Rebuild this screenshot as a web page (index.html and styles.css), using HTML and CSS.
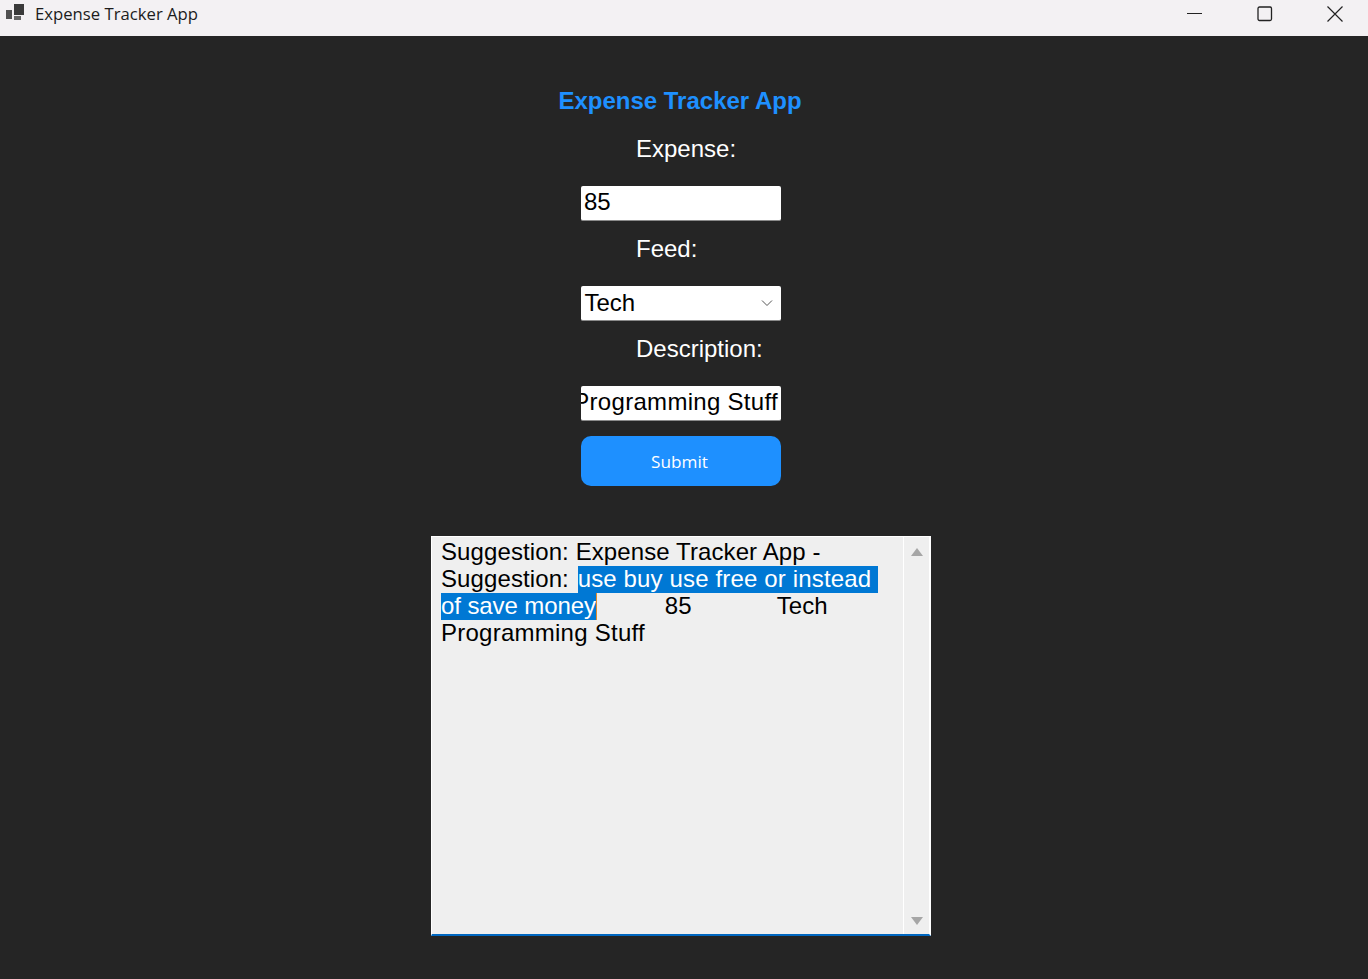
FILE: index.html
```html
<!DOCTYPE html>
<html lang="en">
<head>
    <meta charset="UTF-8">
    <title>Expense Tracker App</title>
    <link rel="stylesheet" href="styles.css">
</head>
<body>
    <!-- Window title bar -->
    <header class="titlebar">
        <svg class="app-icon" width="20" height="18" viewBox="0 0 20 18">
            <rect x="1" y="6" width="6" height="9" fill="#505050"/>
            <rect x="9" y="0" width="10" height="11" fill="#3a3a3a"/>
            <rect x="9" y="12" width="7" height="4" fill="#666"/>
        </svg>
        <span class="app-name">Expense Tracker App</span>
        <div class="win-controls">
            <div class="win-btn">
                <svg width="16" height="16" viewBox="0 0 16 16"><path d="M0 7.5H15" stroke="#222" fill="none"/></svg>
            </div>
            <div class="win-btn">
                <svg width="16" height="16" viewBox="0 0 16 16"><rect x="1" y="1" width="13.5" height="13.5" rx="1.5" stroke="#222" stroke-width="1.3" fill="none"/></svg>
            </div>
            <div class="win-btn">
                <svg width="16" height="16" viewBox="0 0 16 16"><path d="M0.5 0.5L15.5 15.5M15.5 0.5L0.5 15.5" stroke="#222" stroke-width="1.2" fill="none"/></svg>
            </div>
        </div>
    </header>

    <main class="app">
        <h1 class="app-title">Expense Tracker App</h1>

        <form class="expense-form">
            <div class="field">
                <label class="field-label">Expense:</label>
                <div class="text-box">85</div>
            </div>
            <div class="field">
                <label class="field-label">Feed:</label>
                <div class="text-box select-box">
                    <span>Tech</span>
                    <svg width="12" height="8" viewBox="0 0 12 8"><path d="M1 1.5L6 6.5L11 1.5" stroke="#555" fill="none"/></svg>
                </div>
            </div>
            <div class="field">
                <label class="field-label">Description:</label>
                <div class="text-box clipped-box"><span>Programming Stuff</span></div>
            </div>
            <button type="button" class="submit-btn">Submit</button>
        </form>

        <!-- Result box with its own scrollbar -->
        <section class="output">
            <div class="output-text">
                <div class="output-line">Suggestion: Expense Tracker App -</div>
                <div class="output-line">Suggestion: <span class="selected shifted">use buy use free or instead </span></div>
                <div class="output-line"><span class="selected tight">of save money</span><span class="caret"></span>&#9;85&#9;Tech</div>
                <div class="output-line wide">Programming Stuff</div>
            </div>
            <div class="scrollbar">
                <svg width="12" height="8" viewBox="0 0 12 8"><path d="M6 0L12 8H0Z" fill="#a6a6a6"/></svg>
                <svg width="12" height="8" viewBox="0 0 12 8"><path d="M0 0H12L6 8Z" fill="#a6a6a6"/></svg>
            </div>
        </section>
    </main>
</body>
</html>
```

FILE: styles.css
```css
/* General Reset */
* {
    margin: 0;
    padding: 0;
    box-sizing: border-box;
}

body {
    font-family: 'Liberation Sans', Arial, sans-serif;
    background: #252525;
    height: 979px;
    overflow: hidden;
}

.titlebar {
    height: 36px;
    background: #f3f1f3;
    display: flex;
    align-items: center;
}

.app-icon {
    margin-left: 5px;
    margin-bottom: 10px;
}

.app-name {
    margin-left: 10px;
    margin-bottom: 10px;
    font-family: 'Open Sans', sans-serif;
    font-size: 16.7px;
    color: #1c1c1c;
}

.win-controls {
    margin-left: auto;
    margin-right: -2px;
    display: flex;
}

.win-btn {
    width: 70px;
    height: 36px;
    padding-bottom: 8px;
    display: flex;
    justify-content: center;
    align-items: center;
}

.app {
    display: flex;
    flex-direction: column;
    align-items: center;
    padding-right: 6px;
    padding-top: 50px;
}

.app-title {
    font-size: 24px;
    line-height: 30px;
    font-weight: bold;
    color: #1e90ff;
    margin-right: 2px;
    margin-bottom: 19px;
}

.expense-form {
    width: 200px;
    display: flex;
    flex-direction: column;
    gap: 14px;
}

.field-label {
    display: block;
    padding-left: 55px;
    margin-bottom: 23px;
    font-size: 24px;
    line-height: 28px;
    color: #fff;
    white-space: nowrap;
}

.text-box {
    height: 35px;
    background: #fff;
    border-bottom: 1px solid #8a8a8a;
    border-radius: 2px;
    padding-left: 3px;
    font-size: 24px;
    line-height: 32px;
    color: #000;
}

.select-box {
    padding: 0 8px 0 3.5px;
    display: flex;
    justify-content: space-between;
    align-items: center;
}

.clipped-box {
    padding: 0 3px 0 0;
    display: flex;
    justify-content: flex-end;
    overflow: hidden;
    white-space: nowrap;
    letter-spacing: 0.3px;
}

.submit-btn {
    height: 50px;
    margin-top: 1px;
    padding-right: 3px;
    border: none;
    border-radius: 10px;
    background: #1e90ff;
    color: #fff;
    font-family: 'Open Sans', sans-serif;
    font-size: 17.2px;
}

.output {
    width: 500px;
    height: 400px;
    margin-top: 50px;
    background: #efefef;
    border: 1px solid #fff;
    border-right-width: 2px;
    border-bottom: 2px solid #0067c0;
    display: flex;
}

.output-text {
    flex: 1;
    padding: 1px 0 0 9px;
    font-size: 24px;
    line-height: 27px;
    color: #000;
    letter-spacing: 0.1px;
}

.output-line {
    height: 27px;
    white-space: pre;
    tab-size: 111.9px;
}

.wide {
    letter-spacing: 0.25px;
}

/* highlight sits 1px below the text box of the line */
.selected {
    padding-bottom: 1px;
    background: linear-gradient(#0078d4, #0078d4) 0 1px no-repeat;
    color: #fff;
}

.shifted {
    margin-left: 2px;
    letter-spacing: 0.15px;
}

.tight {
    letter-spacing: -0.1px;
}

.caret {
    display: inline-block;
    width: 1px;
    height: 27px;
    margin-top: 1px;
    vertical-align: top;
    background: #e08a2c;
}

.scrollbar {
    width: 26px;
    flex: none;
    border-left: 1px solid #fff;
    padding: 11px 0 9px;
    display: flex;
    flex-direction: column;
    justify-content: space-between;
    align-items: center;
}
```
